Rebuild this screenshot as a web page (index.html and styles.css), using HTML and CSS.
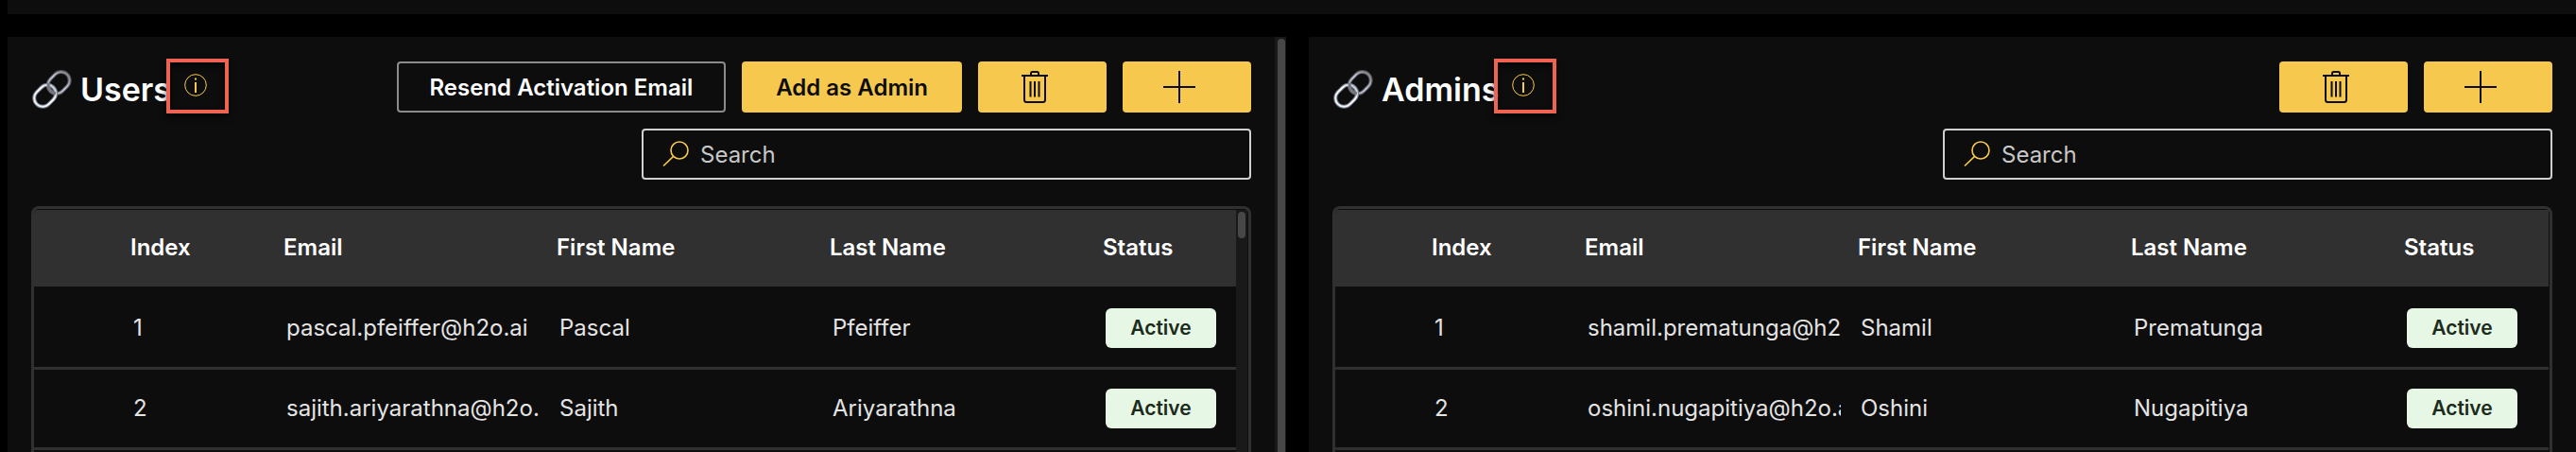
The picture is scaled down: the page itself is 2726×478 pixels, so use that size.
FILE: index.html
```
<!DOCTYPE html>
<html lang="en">
<head>
<meta charset="utf-8">
<meta name="viewport" content="width=device-width, initial-scale=1">
<title>Users and Admins</title>
<link rel="stylesheet" href="styles.css">
</head>
<body>
<svg class="sprite" aria-hidden="true">
  <defs>
    <linearGradient id="steel" x1="0" y1="0" x2="1" y2="0">
      <stop offset="0" stop-color="#a9a5a9"/>
      <stop offset="0.5" stop-color="#c3cfe2"/>
      <stop offset="1" stop-color="#8f8a90"/>
    </linearGradient>
    <linearGradient id="chrome" x1="0" y1="0" x2="1" y2="0">
      <stop offset="0" stop-color="#eef3fa"/>
      <stop offset="0.6" stop-color="#ffffff"/>
      <stop offset="1" stop-color="#c9d2df"/>
    </linearGradient>
  </defs>
  <symbol id="i-link" viewBox="0 0 42 42">
    <g fill="none">
      <rect x="15.700" y="4.500" width="25" height="18" rx="9" transform="rotate(-45 28.200 13.500)" stroke="#5a585e" stroke-width="4"/>
      <rect x="15.700" y="4.500" width="25" height="18" rx="9" transform="rotate(-45 28.200 13.500)" stroke="url(#steel)" stroke-width="1.800"/>
      <rect x="1.200" y="18.300" width="25" height="18" rx="9" transform="rotate(-45 13.700 27.300)" stroke="#737b88" stroke-width="4"/>
      <rect x="1.200" y="18.300" width="25" height="18" rx="9" transform="rotate(-45 13.700 27.300)" stroke="url(#chrome)" stroke-width="2"/>
      <path d="M17 14.500c0 5 3 9 8 10.500" stroke="#77737a" stroke-width="3"/>
    </g>
  </symbol>
  <symbol id="i-info" viewBox="0 0 24 24">
    <circle cx="12" cy="12" r="11.300" fill="none" stroke="currentColor" stroke-width="1"/>
    <path d="M12 9v11" stroke="currentColor" stroke-width="2"/>
    <path d="M12 4.500v2" stroke="currentColor" stroke-width="2"/>
  </symbol>
  <symbol id="i-trash" viewBox="0 0 28 34">
    <g fill="none" stroke="currentColor" stroke-width="2">
      <path d="M0 5h28M10 5V2.500Q10 1 11.500 1h5Q18 1 18 2.500V5"/>
      <path d="M3 5v25.500Q3 33 5.500 33h17Q25 33 25 30.500V5M9.500 11v16.500M14 11v16.500M18.500 11v16.500"/>
    </g>
  </symbol>
  <symbol id="i-plus" viewBox="0 0 34 34">
    <path d="M17 0v34M0 17h34" stroke="currentColor" stroke-width="2"/>
  </symbol>
  <symbol id="i-search" viewBox="0 0 28 28">
    <g fill="none" stroke="currentColor" stroke-width="1.600">
      <circle cx="18" cy="10" r="9"/>
      <path d="M11.600 16.400 1 26.500"/>
    </g>
  </symbol>
</svg>

<div class="app">
  <header class="topbar"></header>
  <main class="panels">
    <section class="panel" aria-labelledby="users-title">
      <div class="panel-head">
        <div class="title">
          <svg class="title-icon" aria-hidden="true"><use href="#i-link"/></svg>
          <h2 id="users-title">Users</h2>
          <button class="info" type="button" aria-label="About users"><svg aria-hidden="true"><use href="#i-info"/></svg></button>
        </div>
        <div class="tools">
          <div class="actions">
            <button class="btn btn-outline" type="button">Resend Activation Email</button>
            <button class="btn" type="button">Add as Admin</button>
            <button class="btn btn-icon" type="button" aria-label="Delete users"><svg class="trash" aria-hidden="true"><use href="#i-trash"/></svg></button>
            <button class="btn btn-icon" type="button" aria-label="Add user"><svg class="plus" aria-hidden="true"><use href="#i-plus"/></svg></button>
          </div>
          <label class="search">
            <svg aria-hidden="true"><use href="#i-search"/></svg>
            <input type="search" placeholder="Search" aria-label="Search users">
          </label>
        </div>
      </div>
      <div class="grid">
        <table>
          <colgroup><col class="c-check"><col class="c-index"><col class="c-text"><col class="c-text"><col class="c-text"><col></colgroup>
          <thead>
            <tr><td></td><th scope="col">Index</th><th scope="col">Email</th><th scope="col">First Name</th><th scope="col">Last Name</th><th scope="col">Status</th></tr>
          </thead>
          <tbody>
            <tr><td></td><td>1</td><td><div class="clip">pascal.pfeiffer@h2o.ai</div></td><td>Pascal</td><td>Pfeiffer</td><td><span class="badge">Active</span></td></tr>
            <tr><td></td><td>2</td><td><div class="clip">sajith.ariyarathna@h2o.ai</div></td><td>Sajith</td><td>Ariyarathna</td><td><span class="badge">Active</span></td></tr>
          </tbody>
        </table>
        <div class="scroll"><div class="thumb thumb-short"></div></div>
      </div>
    </section>
    <div class="scroll scroll-page"><div class="thumb thumb-long"></div></div>
    <section class="panel panel-next" aria-labelledby="admins-title">
      <div class="panel-head">
        <div class="title">
          <svg class="title-icon" aria-hidden="true"><use href="#i-link"/></svg>
          <h2 id="admins-title">Admins</h2>
          <button class="info" type="button" aria-label="About admins"><svg aria-hidden="true"><use href="#i-info"/></svg></button>
        </div>
        <div class="tools">
          <div class="actions">
            <button class="btn btn-icon" type="button" aria-label="Delete admins"><svg class="trash" aria-hidden="true"><use href="#i-trash"/></svg></button>
            <button class="btn btn-icon" type="button" aria-label="Add admin"><svg class="plus" aria-hidden="true"><use href="#i-plus"/></svg></button>
          </div>
          <label class="search">
            <svg aria-hidden="true"><use href="#i-search"/></svg>
            <input type="search" placeholder="Search" aria-label="Search admins">
          </label>
        </div>
      </div>
      <div class="grid">
        <table>
          <colgroup><col class="c-check"><col class="c-index"><col class="c-text"><col class="c-text"><col class="c-text"><col></colgroup>
          <thead>
            <tr><td></td><th scope="col">Index</th><th scope="col">Email</th><th scope="col">First Name</th><th scope="col">Last Name</th><th scope="col">Status</th></tr>
          </thead>
          <tbody>
            <tr><td></td><td>1</td><td><div class="clip">shamil.prematunga@h2o.ai</div></td><td>Shamil</td><td>Prematunga</td><td><span class="badge">Active</span></td></tr>
            <tr><td></td><td>2</td><td><div class="clip">oshini.nugapitiya@h2o.ai</div></td><td>Oshini</td><td>Nugapitiya</td><td><span class="badge">Active</span></td></tr>
          </tbody>
        </table>
      </div>
    </section>
  </main>
</div>
</body>
</html>
```
FILE: styles.css
```
:root {
  --bg: #000;
  --panel: #0d0d0d;
  --line: #303030;
  --accent: #f6c94e;
  --mark: #ee6352;
}

*, *::after { box-sizing: border-box; }

body {
  margin: 0;
  background: var(--bg);
  color: #e4e4e4;
  font-family: Inter, "Liberation Sans", sans-serif;
  font-size: 24px;
  line-height: 32px;
}

button, input { font: inherit; }

.sprite { position: absolute; width: 0; height: 0; }

.app {
  display: flex;
  flex-direction: column;
  gap: 24px;
  height: 100vh;
  padding-left: 8px;
  overflow: hidden;
}

.topbar { flex: none; height: 15px; background: var(--panel); }

.panels {
  flex: 1;
  display: grid;
  grid-template-columns: minmax(0, 1fr) 12px minmax(0, calc(50% + 6px));
  min-height: 0;
}

.panel {
  display: flex;
  flex-direction: column;
  gap: 28px;
  min-width: 0;
  min-height: 0;
  padding: 26px 25px 0;
  background: var(--panel);
}

.panel-next { margin-left: 24px; }

.panel-head { display: flex; justify-content: space-between; }

.title { display: flex; align-items: flex-start; }
.title-icon { width: 42px; height: 42px; margin: 9px 9px 0 1px; }

h2 {
  margin: 10px 14px 0 0;
  color: #fff;
  font-size: 34px;
  font-weight: 600;
  line-height: 40px;
}

.info {
  position: relative;
  width: 24px;
  height: 24px;
  margin-top: 13px;
  padding: 0;
  border: 0;
  background: none;
  color: var(--accent);
}
.info svg { display: block; width: 24px; height: 24px; }
.info::after {
  content: "";
  position: absolute;
  top: -16px;
  left: -19px;
  width: 66px;
  height: 58px;
  border: 4px solid var(--mark);
  box-shadow: 0 4px 6px rgba(0, 0, 0, 0.6), inset 0 4px 6px rgba(0, 0, 0, 0.6);
}

.tools { display: flex; flex-direction: column; align-items: flex-end; gap: 17px; }
.actions { display: flex; gap: 17px; }

.btn {
  height: 54px;
  padding: 2px 36px 0;
  border: 0;
  border-radius: 4px;
  background: var(--accent);
  color: #0d0d0d;
  font-weight: 600;
  white-space: nowrap;
}
.btn-outline {
  padding: 2px 33px 0;
  border: 2px solid #8b8b8b;
  background: none;
  color: #fff;
}
.btn-icon { display: flex; align-items: center; justify-content: center; width: 136px; padding: 0 16px 0 0; }
.trash { width: 28px; height: 34px; }
.plus { width: 34px; height: 34px; }

.search {
  display: flex;
  align-items: center;
  gap: 12px;
  width: 645px;
  height: 54px;
  padding: 0 20px;
  border: 2px solid #d0d0d0;
  border-radius: 4px;
}
.search svg { flex: none; width: 28px; height: 28px; color: var(--accent); }
.search input {
  flex: 1;
  min-width: 0;
  padding: 2px 0 0;
  border: 0;
  outline: 0;
  background: none;
  color: #e4e4e4;
}
.search input::placeholder { color: #c8c8c8; opacity: 1; }

.grid {
  flex: 1;
  display: flex;
  min-height: 0;
  padding: 1px 1px 0 0;
  border: 3px solid var(--line);
  border-bottom: 0;
  border-radius: 8px 8px 0 0;
  overflow: hidden;
}

table {
  flex: 1;
  align-self: flex-start;
  width: 100%;
  min-width: 0;
  border-collapse: separate;
  border-spacing: 0;
  table-layout: fixed;
}
.c-check { width: 87px; }
.c-index { width: 162px; }
.c-text { width: 289px; }

thead { background: var(--line); }
th {
  height: 81px;
  padding: 0 3px 2px 15px;
  color: #fff;
  font-weight: 600;
  text-align: left;
}
tbody td {
  height: 85px;
  padding: 0 3px 0 18px;
  border-bottom: 3px solid var(--line);
}
tbody tr:first-child td { height: 88px; border-top: 3px solid transparent; }

.clip { overflow: hidden; white-space: nowrap; }

.badge {
  display: block;
  width: 117px;
  padding: 5px 0;
  border-radius: 6px;
  background: #e6f7e5;
  color: #1c2b1b;
  font-size: 21px;
  font-weight: 600;
  text-align: center;
}

.scroll { flex: none; width: 12px; padding: 2px; background: #191919; }
.scroll-page { padding: 2px 1px 0 3px; }
.thumb { border-radius: 4px; background: #474747; }
.thumb-short { height: 28px; }
.thumb-long { height: 100%; border-radius: 4px 4px 0 0; }
```
